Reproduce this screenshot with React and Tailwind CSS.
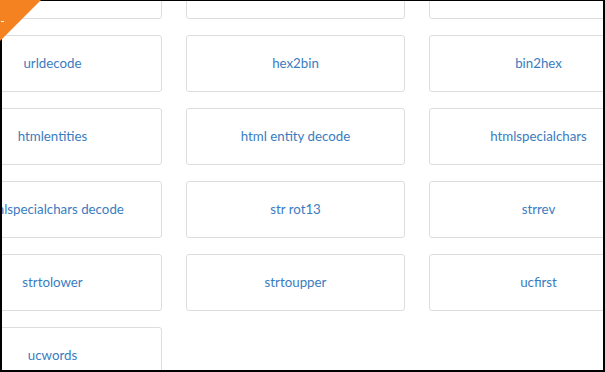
import React from "react";

const rows = [
  ["", "", ""],
  ["urldecode", "hex2bin", "bin2hex"],
  ["htmlentities", "html entity decode", "htmlspecialchars"],
  ["htmlspecialchars decode", "str rot13", "strrev"],
  ["strtolower", "strtoupper", "ucfirst"],
  ["ucwords"],
];

export default function App() {
  const items = rows.flat();
  return (
    <div className="relative w-[605px] h-[372px] bg-white">
      <div className="w-[605px] h-[372px] overflow-hidden border-black border-l-2 border-r-2 border-b-2 border-t bg-white">
        <div
          className="grid grid-cols-[219px_219px_219px] gap-x-[24px] gap-y-[16px] ml-[-59px] mt-[-39px]"
          style={{ fontFamily: "Lato, 'Noto Sans', sans-serif" }}
        >
          {items.map((t, i) => (
            <div
              key={i}
              className="h-[57px] flex items-center justify-center rounded-[3px] border border-[#dddddd] bg-white text-[13.3px] text-[#3a7cc0] whitespace-nowrap"
            >
              {t}
            </div>
          ))}
        </div>
      </div>
      <div className="absolute top-0 left-0 w-0 h-0 border-t-[41px] border-r-[41px] border-t-[#f58220] border-r-transparent" />
      <div className="absolute left-[1px] top-[21px] w-[3px] h-[1px] bg-white" />
    </div>
  );
}
